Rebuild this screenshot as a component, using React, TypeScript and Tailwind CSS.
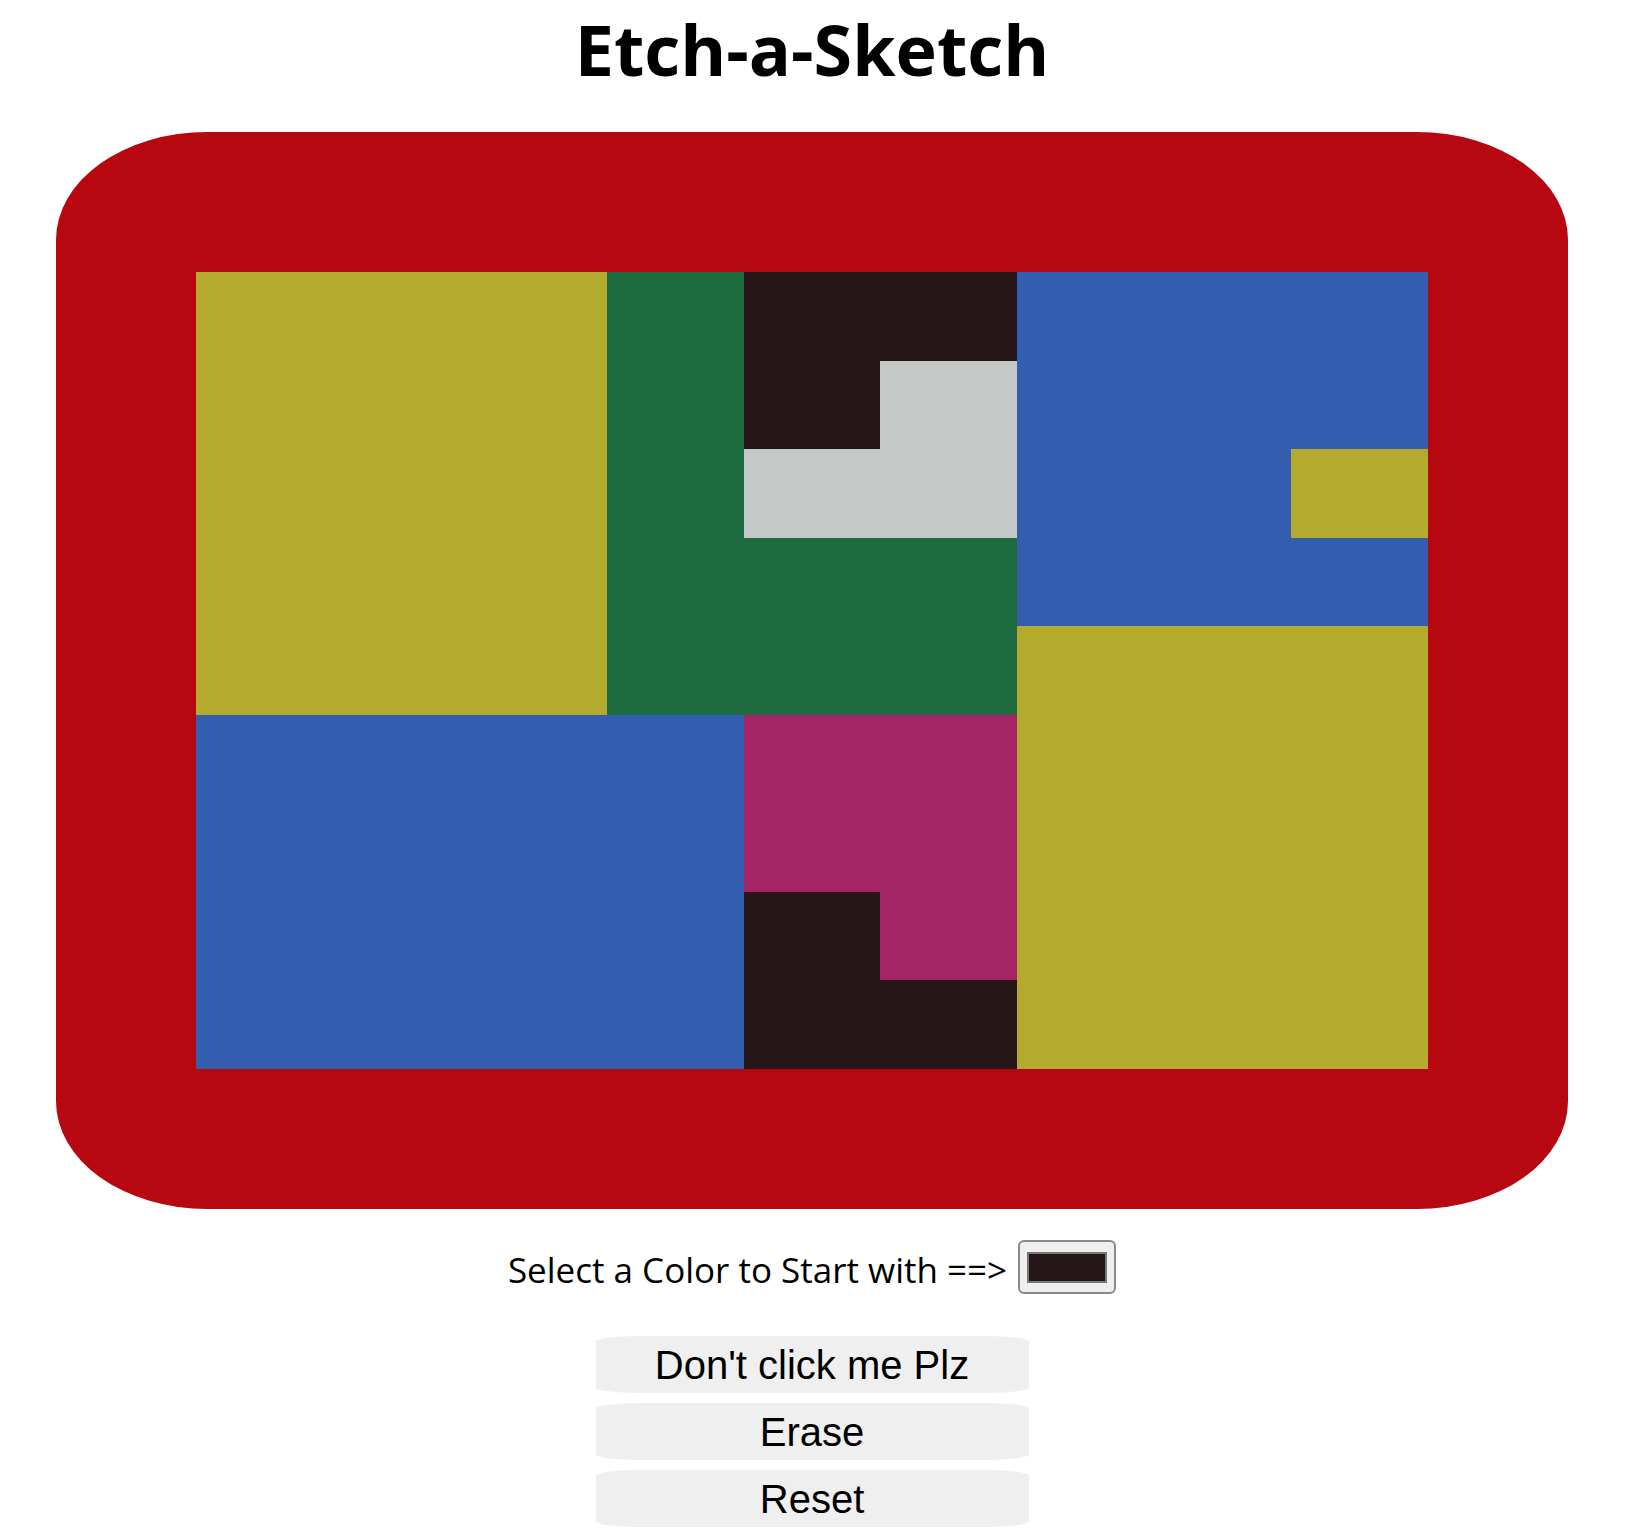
import React from "react";

const C: Record<string, string> = {
  Y: "bg-[#b4ab2e]",
  G: "bg-[#1e6b40]",
  D: "bg-[#251617]",
  L: "bg-[#c4c9c7]",
  B: "bg-[#335dae]",
  M: "bg-[#a52466]",
};

const rows = [
  "YYYGDDBBB",
  "YYYGDLBBB",
  "YYYGLLBBY",
  "YYYGGGBBB",
  "YYYGGGYYY",
  "BBBBMMYYY",
  "BBBBMMYYY",
  "BBBBDMYYY",
  "BBBBDDYYY",
];

export default function App() {
  return (
    <div className="w-[1624px] bg-white flex flex-col items-center text-black">
      <h1
        className="mt-[14px] text-[70px] leading-[70px] font-bold"
        style={{ fontFamily: '"Open Sans", sans-serif' }}
      >
        Etch-a-Sketch
      </h1>
      <div className="mt-[48px] w-[1512px] h-[1077px] p-[140px] bg-[#b70711] rounded-[10%]">
        <div className="grid grid-cols-9 grid-rows-9 w-full h-full">
          {rows.flatMap((r, i) =>
            r.split("").map((c, j) => <div key={`${i}-${j}`} className={C[c]} />)
          )}
        </div>
      </div>
      <div className="mt-[31px] h-[54px] flex items-center gap-[11px]">
        <span
          className="text-[35px] leading-[48px] mt-[6px]"
          style={{ fontFamily: '"Open Sans", sans-serif' }}
        >
          Select a Color to Start with ==&gt;
        </span>
        <div className="w-[98px] h-[54px] rounded-[6px] border-2 border-[#8a8a8a] bg-[#efefef] flex items-center justify-center">
          <div className="w-[80px] h-[31px] border-2 border-[#777777] bg-[#251617]" />
        </div>
      </div>
      <div
        className="mt-[42px] flex flex-col gap-[10px]"
        style={{ fontFamily: '"Liberation Sans", Arial, sans-serif' }}
      >
        {["Don't click me Plz", "Erase", "Reset"].map((t) => (
          <button
            key={t}
            className="w-[433px] h-[57px] rounded-[10%] bg-[#efefef] text-[40px] leading-none text-black flex items-center justify-center"
          >
            {t}
          </button>
        ))}
      </div>
    </div>
  );
}
